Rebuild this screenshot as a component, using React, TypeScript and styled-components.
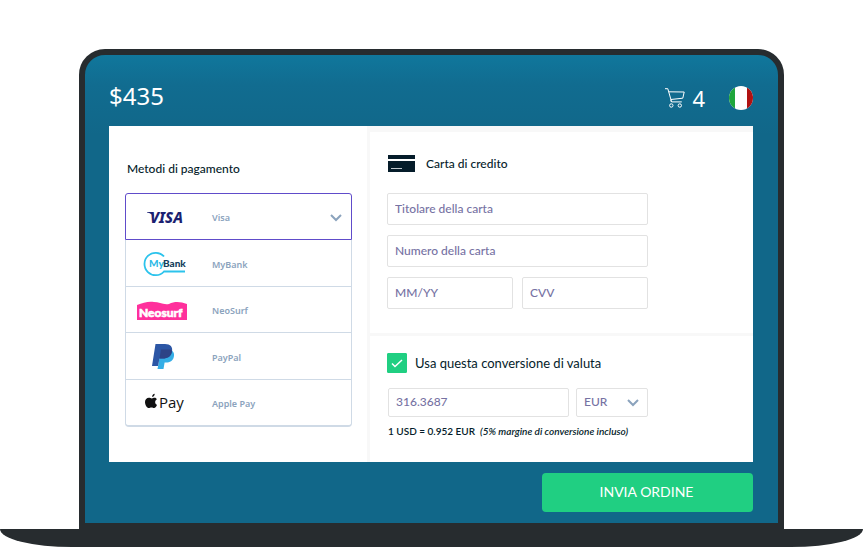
import React, { useState } from 'react';
import styled, { createGlobalStyle } from 'styled-components';

const ink = '#051c2a';
const lilac = '#7672a3';
const slate = '#8ba3bd';
const line = '#cfdae6';
const soft = '#f8f8f8';
const shell = '#272c2f';
const green = '#20cf82';
const violet = '#604cca';

const GlobalStyle = createGlobalStyle`
  *, *::before, *::after { box-sizing: border-box; }
  body { margin: 0; background: #fff; color: ${ink}; font-family: Lato, "Liberation Sans", sans-serif; }
  button, input, select { font: inherit; color: inherit; margin: 0; }
  svg { display: block; }
`;

const Page = styled.div`
  padding-top: 49px;
`;

const Screen = styled.main`
  margin: 0 79px;
  border: 6px solid ${shell};
  border-radius: 26px 26px 0 0;
  background: linear-gradient(#10779c 0, #116c90 30px, #116789 80px);
  padding: 0 25px 11px 24px;
`;

const Base = styled.div`
  height: 18px;
  background: ${shell};
  border-radius: 0 0 72px 72px / 0 0 18px 18px;
`;

const Header = styled.header`
  height: 71px;
  padding-top: 14px;
  display: flex;
  align-items: center;
  justify-content: space-between;
  color: #fff;
`;

const Amount = styled.span`
  font-family: "Noto Sans", sans-serif;
  font-size: 24px;
  line-height: 28px;
  padding-bottom: 4px;
`;

const Tools = styled.div`
  display: flex;
  align-items: center;
  gap: 24px;
`;

const Cart = styled.button`
  border: 0;
  padding: 0;
  background: none;
  color: #fff;
  display: flex;
  align-items: center;
  gap: 7px;
  font-family: "Noto Sans", sans-serif;
  font-size: 22px;
  line-height: 24px;
`;

const Language = styled.button`
  border: 0;
  padding: 0;
  background: none;
`;

const Panel = styled.div`
  display: grid;
  grid-template-columns: 261px minmax(0, 1fr);
  background: #fff;
  min-height: 336px;
`;

const Methods = styled.section`
  padding: 34px 15px 30px 16px;
  border-right: 3px solid ${soft};
`;

const MethodsTitle = styled.h2`
  margin: 0 0 16px 2px;
  font-size: 12px;
  line-height: 17px;
  font-weight: 500;
`;

const MethodList = styled.ul`
  list-style: none;
  margin: 0;
  padding: 0;
`;

const MethodItem = styled.li`
  &:nth-child(2) > button { height: 46px; }
  &:last-child > button { border-radius: 0 0 4px 4px; border-bottom-width: 2px; }
`;

const MethodButton = styled.button<{ $selected?: boolean }>`
  display: grid;
  grid-template-columns: 72px 1fr 12px;
  align-items: center;
  column-gap: 4px;
  width: 100%;
  height: 47px;
  padding: 2px 9px 0 10px;
  border: 1px solid ${(p) => (p.$selected ? violet : line)};
  border-top-width: ${(p) => (p.$selected ? 1 : 0)}px;
  border-radius: ${(p) => (p.$selected ? '3px 3px 0 0' : '0')};
  background: #fff;
  color: ${slate};
  font-family: "Noto Sans", sans-serif;
  font-size: 9px;
  font-weight: 600;
  text-align: left;
`;

const Details = styled.div`
  border-top: 6px solid ${soft};
  display: flex;
  flex-direction: column;
`;

const CardForm = styled.form`
  padding: 20px 17px 24px;
  border-bottom: 3px solid ${soft};
`;

const CardTitle = styled.h2`
  display: flex;
  align-items: center;
  gap: 11px;
  margin: 0 0 18px;
  padding-left: 1px;
  height: 23px;
  font-size: 12px;
  line-height: 16px;
  font-weight: 500;
`;

const Fields = styled.div`
  display: grid;
  grid-template-columns: 1fr 1fr;
  gap: 10px 9px;
  max-width: 261px;
`;

const Field = styled.input<{ $wide?: boolean; $low?: boolean }>`
  grid-column: ${(p) => (p.$wide ? '1 / -1' : 'auto')};
  width: 100%;
  min-width: 0;
  height: ${(p) => (p.$low ? 29 : 32)}px;
  padding: 0 7px 2px;
  border: 1px solid #e2e2e2;
  border-radius: 2px;
  background: #fff;
  color: ${lilac};
  font-size: 12px;
  font-weight: 500;
  outline: none;
  &::placeholder { color: ${lilac}; opacity: 1; }
  &:focus { border-color: ${violet}; }
`;

const Conversion = styled.section`
  padding: 17px 17px 20px;
`;

const Check = styled.label`
  display: flex;
  align-items: center;
  gap: 8px;
  font-size: 13px;
  line-height: 20px;
`;

const CheckBox = styled.span`
  display: grid;
  place-items: center;
  width: 20px;
  height: 20px;
  > * { grid-area: 1 / 1; }
  > svg { pointer-events: none; }
`;

const CheckInput = styled.input`
  appearance: none;
  width: 20px;
  height: 20px;
  border: 1px solid ${green};
  border-radius: 1px;
  background: #fff;
  &:checked { background: ${green}; }
`;

const Exchange = styled.div`
  display: grid;
  grid-template-columns: 1fr 72px;
  gap: 7px;
  max-width: 261px;
  margin-top: 15px;
  padding-left: 1px;
`;

const Currency = styled.div`
  display: grid;
  align-items: center;
  > * { grid-area: 1 / 1; }
  > svg { justify-self: end; margin-right: 9px; pointer-events: none; }
`;

const CurrencySelect = styled.select`
  appearance: none;
  width: 100%;
  height: 29px;
  padding: 0 7px 2px;
  border: 1px solid #e2e2e2;
  border-radius: 2px;
  background: #fff;
  color: ${lilac};
  font-size: 12px;
  font-weight: 500;
`;

const Note = styled.p`
  margin: 6px 0 0 1px;
  font-size: 10px;
  line-height: 16px;
  font-weight: 600;
  white-space: nowrap;
`;

const Margin = styled.em`
  margin-left: 5px;
`;

const Footer = styled.footer`
  display: flex;
  justify-content: flex-end;
  padding-top: 11px;
`;

const Submit = styled.button`
  width: 211px;
  height: 39px;
  padding: 0 8px 2px 6px;
  border: 0;
  border-radius: 4px;
  background: ${green};
  color: #fff;
  font-size: 14px;
`;

const Chevron = () => (
  <svg width="12" height="8" viewBox="0 0 12 8" fill="none" stroke={slate} strokeWidth="2" aria-hidden="true">
    <path d="M1 1l5 5 5-5" />
  </svg>
);

const CartIcon = () => (
  <svg width="20" height="20" viewBox="0 0 20 20" fill="none" stroke="#fff" strokeWidth="1" aria-hidden="true">
    <path d="M0 .7h2.8l3.8 13.2h10.2M3.8 3.8L19.2 4l-1.4 6.2-12 1.3M6.3 13.8c-.8-.9-.6-1.8.3-2.4" />
    <circle cx="6.3" cy="17.5" r="1.7" />
    <circle cx="14.8" cy="17.5" r="1.7" />
  </svg>
);

const ItalyFlag = () => (
  <svg width="24" height="24" viewBox="0 0 24 24" aria-hidden="true">
    <clipPath id="disc"><circle cx="12" cy="12" r="12" /></clipPath>
    <g clipPath="url(#disc)">
      <path fill="#fff" d="M0 0h24v24H0z" />
      <path fill="#1fa63c" d="M0 0h6v24H0z" />
      <path fill="#b01212" d="M18 0h6v24h-6z" />
    </g>
  </svg>
);

const CardIcon = () => (
  <svg width="27" height="17" viewBox="0 0 27 17" aria-hidden="true">
    <path fill={ink} d="M0 0h27v4H0zM0 6h27v11H0z" />
    <path stroke="#c3cad0" d="M3 13.5h11" />
  </svg>
);

const VisaLogo = () => (
  <svg width="72" height="30" viewBox="0 0 72 30" aria-hidden="true">
    <path fill="#1b1f71" d="M11 9h6l1 5c-1.5-2.5-4-4-7-4.5z" />
    <text x="14" y="20" fill="#1b1f71" fontFamily="Noto Sans" fontSize="15" fontWeight="800" fontStyle="italic">VISA</text>
  </svg>
);

const MyBankLogo = () => (
  <svg width="72" height="30" viewBox="0 0 72 30" aria-hidden="true">
    <path d="M28 7.5A11.2 11.2 0 1 0 28 22.500h21" fill="none" stroke="#2cc3ec" strokeWidth="1.8" />
    <text x="13" y="18" fill="#2cb9e6" fontFamily="Lato" fontSize="10" fontWeight="900">My</text>
    <text x="27" y="18" fill="#16415c" fontFamily="Lato" fontSize="10" fontWeight="900">Bank</text>
  </svg>
);

const NeosurfLogo = () => (
  <svg width="72" height="30" viewBox="0 0 72 30" aria-hidden="true">
    <path fill="#ff309c" d="M1 9C7 7 12 5 18 6c5 0 9 3 15 2 6-3 12-2 18 0v16H1z" />
    <text x="3" y="21" fill="#fff" stroke="#fff" strokeWidth=".6" fontFamily="Lato" fontSize="12" fontWeight="900">Neosurf</text>
  </svg>
);

const PayPalLogo = () => (
  <svg width="72" height="30" viewBox="0 0 72 30" aria-hidden="true">
    <path fill="#35aee6" d="M34.5 8c3.5 1.5 4 4 3.3 7-1 4-3.8 5.5-7.8 5.5h-1.4L27.5 27H21.500l2.5-14z" />
    <path fill="#2c56a5" d="M19.5 2H29c5.500 0 8 3 7 7.500-1 5-4.500 7-9.500 7h-3L22 24h-6z" />
    <path fill="#2d4386" d="M25 7.500h8.500c1 .1 2 .4 2.600.9C35.600 14 32 16.500 26.500 16.500h-3z" />
  </svg>
);

const ApplePayLogo = () => (
  <svg width="72" height="30" viewBox="0 0 72 30" aria-hidden="true">
    <path transform="translate(0 2) scale(.9)" d="M17.8 6.500c.1-2 1.300-3.300 3-3.500.1 2-1.400 3.500-3 3.500zM20.900 7.400c-1.700 0-2.300.8-3.300.8-1.100 0-2-.8-3.300-.8-2.300 0-4.300 1.800-4.300 4.900 0 3.300 2.300 6.700 4.200 6.700 1.100 0 1.600-.7 3-.7s1.700.7 2.900.7c1.400 0 2.600-1.900 3.300-3.600-2.800-1.200-2.700-5-.1-6.300-.6-1-1.500-1.700-2.400-1.700z" fill="#111" />
    <text x="23" y="19" fill="#111" fontFamily="Open Sans" fontSize="15" fontWeight="400">Pay</text>
  </svg>
);

const methods = [
  { name: 'MyBank', Logo: MyBankLogo },
  { name: 'NeoSurf', Logo: NeosurfLogo },
  { name: 'PayPal', Logo: PayPalLogo },
  { name: 'Apple Pay', Logo: ApplePayLogo },
];

export default function App() {
  const [convert, setConvert] = useState(true);
  return (
    <Page>
      <GlobalStyle />
      <Screen>
        <Header>
          <Amount>$435</Amount>
          <Tools>
            <Cart type="button" aria-label="Carrello: 4"><CartIcon />4</Cart>
            <Language type="button" aria-label="Italiano"><ItalyFlag /></Language>
          </Tools>
        </Header>
        <Panel>
          <Methods>
            <MethodsTitle>Metodi di pagamento</MethodsTitle>
            <MethodButton type="button" $selected aria-expanded="true">
              <VisaLogo />Visa<Chevron />
            </MethodButton>
            <MethodList>
              {methods.map(({ name, Logo }) => (
                <MethodItem key={name}>
                  <MethodButton type="button"><Logo />{name}</MethodButton>
                </MethodItem>
              ))}
            </MethodList>
          </Methods>
          <Details>
            <CardForm id="card" onSubmit={(e) => e.preventDefault()}>
              <CardTitle><CardIcon />Carta di credito</CardTitle>
              <Fields>
                <Field $wide placeholder="Titolare della carta" aria-label="Titolare della carta" />
                <Field $wide placeholder="Numero della carta" aria-label="Numero della carta" />
                <Field placeholder="MM/YY" aria-label="MM/YY" />
                <Field placeholder="CVV" aria-label="CVV" />
              </Fields>
            </CardForm>
            <Conversion>
              <Check>
                <CheckBox>
                  <CheckInput type="checkbox" checked={convert} onChange={(e) => setConvert(e.target.checked)} />
                  <svg width="12" height="9" viewBox="0 0 12 9" fill="none" stroke="#fff" strokeWidth="1.5" aria-hidden="true">
                    <path d="M1 4.5l3 3L11 1" />
                  </svg>
                </CheckBox>
                Usa questa conversione di valuta
              </Check>
              <Exchange>
                <Field $low defaultValue="316.3687" aria-label="Importo" />
                <Currency>
                  <CurrencySelect aria-label="Valuta" defaultValue="EUR">
                    <option>EUR</option>
                    <option>USD</option>
                  </CurrencySelect>
                  <Chevron />
                </Currency>
              </Exchange>
              <Note>1 USD = 0.952 EUR<Margin>(5% margine di conversione incluso)</Margin></Note>
            </Conversion>
          </Details>
        </Panel>
        <Footer>
          <Submit type="submit" form="card">INVIA ORDINE</Submit>
        </Footer>
      </Screen>
      <Base />
    </Page>
  );
}
